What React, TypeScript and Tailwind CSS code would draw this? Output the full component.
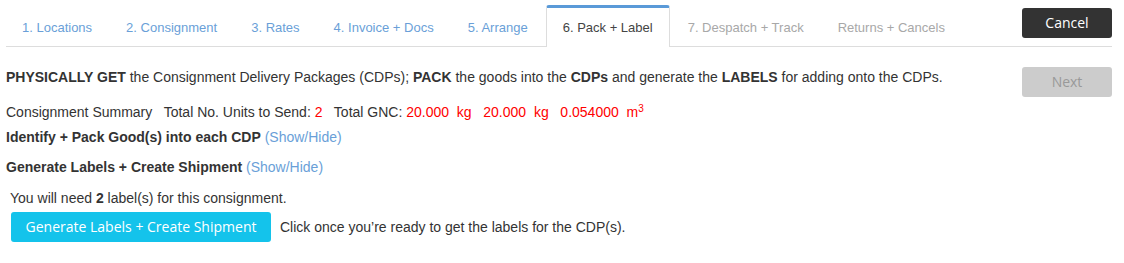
const tabs = [
  { label: "1. Locations", state: "link" },
  { label: "2. Consignment", state: "link" },
  { label: "3. Rates", state: "link" },
  { label: "4. Invoice + Docs", state: "link" },
  { label: "5. Arrange", state: "link" },
  { label: "6. Pack + Label", state: "active" },
  { label: "7. Despatch + Track", state: "disabled" },
  { label: "Returns + Cancels", state: "disabled" },
];

function TabBar() {
  return (
    <div className="flex items-start border-b border-[#dddddd] pt-[5px]">
      <ul className="flex">
        {tabs.map((t) => (
          <li
            key={t.label}
            className={
              t.state === "active"
                ? "-mb-px mr-[2px] flex h-[42px] items-center rounded-t-[3px] border-x border-t-[3px] border-x-[#dddddd] border-t-[#5a9ad8] bg-white px-[16px] text-[13px] text-[#444]"
                : t.state === "link"
                  ? "-mb-px mr-[2px] flex h-[42px] items-center border-x border-t-[3px] border-transparent px-[15px] text-[13px] text-[#6a9fd8]"
                  : "-mb-px mr-[2px] flex h-[42px] items-center border-x border-t-[3px] border-transparent px-[15px] text-[13px] text-[#a8a8a8]"
            }
          >
            {t.label}
          </li>
        ))}
      </ul>
      <button className="ml-auto mt-[3px] h-[30px] w-[90px] rounded-[3px] bg-[#333333] font-['Open_Sans',sans-serif] text-[14px] text-white">
        Cancel
      </button>
    </div>
  );
}

export default function App() {
  return (
    <div className="min-h-[263px] bg-white pl-[6px] pr-[12px] font-['Liberation_Sans',Arial,sans-serif] text-[14px] leading-[20px] text-[#333333]">
      <TabBar />

      <div className="mt-[20px] flex items-start justify-between">
        <p>
          <b>PHYSICALLY GET</b> the Consignment Delivery Packages (CDPs); <b>PACK</b> the goods into
          the <b>CDPs</b> and generate the <b>LABELS</b> for adding onto the CDPs.
        </p>
        <button className="h-[30px] w-[90px] rounded-[3px] bg-[#cccccc] font-['Open_Sans',sans-serif] text-[14px] text-[#999999]">
          Next
        </button>
      </div>

      <p className="mt-[5px] whitespace-pre">
        {"Consignment Summary   Total No. Units to Send: "}
        <span className="text-[#ff0000]">2</span>
        {"   Total GNC: "}
        <span className="text-[#ff0000]">
          {"20.000  kg   20.000  kg   0.054000  m"}
          <sup className="text-[10px]">3</sup>
        </span>
      </p>

      <p className="mt-[5px]">
        <b>Identify + Pack Good(s) into each CDP</b>{" "}
        <span className="text-[#6a9fd8]">(Show/Hide)</span>
      </p>

      <p className="mt-[10px]">
        <b>Generate Labels + Create Shipment</b>{" "}
        <span className="text-[#6a9fd8]">(Show/Hide)</span>
      </p>

      <div className="pl-[4px]">
        <p className="mt-[11px]">
          You will need <b>2</b> label(s) for this consignment.
        </p>
        <div className="mt-[4px] flex items-center gap-[9px]">
          <button className="ml-px h-[30px] w-[260px] rounded-[3px] bg-[#14c3eb] font-['Open_Sans',sans-serif] text-[14px] text-white">
            Generate Labels + Create Shipment
          </button>
          <span>Click once you’re ready to get the labels for the CDP(s).</span>
        </div>
      </div>
    </div>
  );
}
